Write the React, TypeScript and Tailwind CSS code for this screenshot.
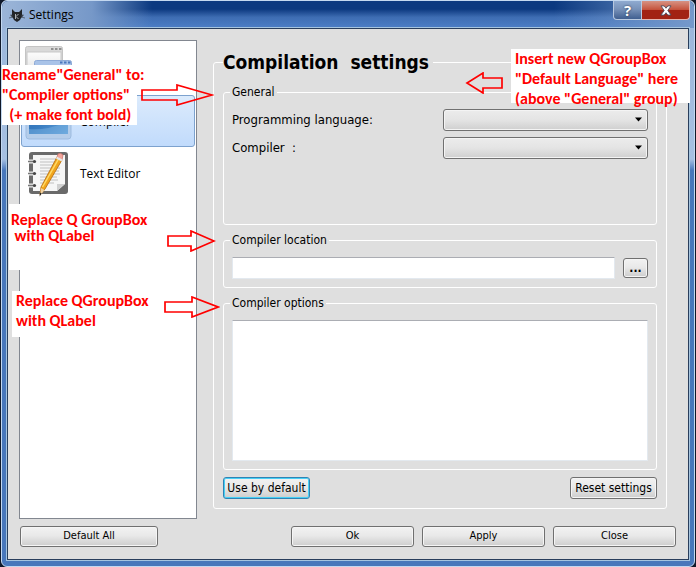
import type { ButtonHTMLAttributes, ReactNode } from 'react';
import { useState } from 'react';

const tahoma = "font-['DejaVu_Sans_Condensed','DejaVu_Sans',sans-serif]";

type PushButtonProps = ButtonHTMLAttributes<HTMLButtonElement> & { highlighted?: boolean };

function PushButton({ className = '', highlighted = false, children, ...rest }: PushButtonProps) {
  const edge = highlighted
    ? 'border-[#2f83b5] shadow-[inset_0_0_0_1px_#48d0f5]'
    : 'border-[#707070] shadow-[inset_0_0_0_1px_#f5f5f5]';
  return (
    <button
      type="button"
      className={`shrink-0 whitespace-nowrap rounded-[3px] border bg-linear-to-b from-[#f2f2f2] from-0% via-[#e9e9e9] via-45% to-[#cdcdcd] text-center text-black ${edge} ${className}`}
      {...rest}
    >
      {children}
    </button>
  );
}

function Group({ title, className = '', children }: { title: string; className?: string; children: ReactNode }) {
  return (
    <fieldset className={`min-w-0 rounded-[3px] border border-white px-2 pb-2 ${className}`}>
      <legend className="-ml-0.5 px-0.5 text-[12px] leading-4">{title}</legend>
      {children}
    </fieldset>
  );
}

function Combo({ id, label }: { id: string; label: string }) {
  return (
    <div className="flex h-[22px] items-center">
      <label htmlFor={id} className="w-[211px] shrink-0 whitespace-pre text-[13px]">{label}</label>
      <div className="relative h-full flex-1">
        <select
          id={id}
          className="block h-full w-full appearance-none rounded-[3px] border border-[#707070] bg-linear-to-b from-[#ececec] via-[#e4e4e4] via-50% to-[#cfcfcf] shadow-[inset_0_0_0_1px_#f4f4f4]"
        >
          <option value=""></option>
        </select>
        <svg className="pointer-events-none absolute right-1.5 top-2" width="7" height="5" viewBox="0 0 7 5">
          <path d="M0 0.5h7L3.5 4.5z" fill="#000" />
        </svg>
      </div>
    </div>
  );
}

function WindowsIcon() {
  return (
    <svg width="48" height="48" viewBox="0 0 48 48" className="shrink-0">
      <defs>
        <linearGradient id="pane" x1="0" y1="0" x2="0" y2="1">
          <stop offset="0" stopColor="#fcfcfc" />
          <stop offset="1" stopColor="#d9d9d9" />
        </linearGradient>
      </defs>
      <rect x="1.5" y="1.5" width="37" height="36" rx="2" fill="#d9d9d9" stroke="#c4c4c4" />
      <rect x="3" y="7" width="34" height="30" fill="url(#pane)" stroke="#c8c8c8" />
      <path d="M27 4h2.500m1.500 0h2.500m1.500 0h2.500" stroke="#8f8f8f" strokeWidth="2" />
      <rect x="10.500" y="15.500" width="37" height="31" rx="2" fill="#a9c3e8" stroke="#8fabd6" />
      <rect x="12" y="20" width="34" height="26" fill="#edf4fd" />
      <path d="M36 17.500h2.500m1.500 0h2.500m1.500 0h2.500" stroke="#4c78bd" strokeWidth="2" />
    </svg>
  );
}

function CompilerIcon() {
  return (
    <svg width="48" height="48" viewBox="0 0 48 48" className="shrink-0">
      <defs>
        <linearGradient id="screen" x1="0" y1="0" x2="1" y2="1">
          <stop offset="0" stopColor="#2b6cb4" />
          <stop offset="0.500" stopColor="#397cc0" />
          <stop offset="1" stopColor="#65a4dc" />
        </linearGradient>
      </defs>
      <rect x="2" y="2" width="45" height="40" rx="3" fill="#b4cdea" stroke="#9dbbe0" />
      <rect x="5" y="7" width="39" height="30" fill="url(#screen)" />
      <path d="M5 37V32Q20 34 44 25V37z" fill="#7cb4e3" opacity="0.45" />
    </svg>
  );
}

function EditorIcon() {
  return (
    <svg width="48" height="48" viewBox="0 0 48 48" className="shrink-0">
      <rect x="5" y="3" width="39" height="42" rx="3" fill="#6a6a6a" />
      <path d="M9 6h32v29l-8 7H9z" fill="#f6f6f6" />
      <path d="M33 42v-7h8z" fill="#d0d0d0" />
      <path d="M16 10h20M16 13h20M16 16h19M16 19h20M16 22h19M16 25h20M16 28h17M16 31h18M16 34h14" stroke="#d2d2d2" strokeWidth="1.500" />
      <path d="M5 12.500h6M5 24.500h6M5 36.500h6" stroke="#eee" strokeWidth="4" />
      <path d="M4 12.500h6M4 24.500h6M4 36.500h6" stroke="#777" strokeWidth="1.500" />
      <circle cx="10.500" cy="12.500" r="1.600" fill="#444" />
      <circle cx="10.500" cy="24.500" r="1.600" fill="#444" />
      <circle cx="10.500" cy="36.500" r="1.600" fill="#444" />
      <path d="M33 8l5 3-17 29-5 6 1-8z" fill="#f1a51d" stroke="#b4690c" strokeWidth="0.800" />
      <path d="M34.500 10L18.500 38" stroke="#ffdb68" strokeWidth="1.500" />
      <path d="M17 39l3.500 2-4.500 6z" fill="#efd2a4" />
      <path d="M16.200 43.500l1.500 1-2.200 3z" fill="#222" />
      <path d="M33 8l1-3q2.500-2 5 1l-1 5z" fill="#f3a49a" stroke="#c37069" strokeWidth="0.700" />
      <path d="M32.500 8.500l5.500 3" stroke="#e8e8e8" strokeWidth="2" />
    </svg>
  );
}

function CatIcon() {
  return (
    <svg width="16" height="16" viewBox="0 0 16 16">
      <path d="M3 2l3 3h4l3-3v5l1 2-2 2-1 2-3 2-3-2-1-2-2-2 1-2z" fill="#222529" />
      <path d="M1 8l3 1M0 11l4-1M15 8l-3 1M16 11l-4-1" stroke="#3f4650" strokeWidth="0.700" />
      <path d="M6.500 7v5M9.500 7L7 9.500 9.500 12" stroke="#aeb3b8" strokeWidth="1" fill="none" />
    </svg>
  );
}

function Arrow({ place, left = false, shaft, head }: { place: string; left?: boolean; shaft: number; head: number }) {
  const w = shaft + head + 2;
  const neck = left ? head : shaft;
  const pts = left
    ? `${w - 1},6 ${neck},6 ${neck},1 2,11 ${neck},21 ${neck},16 ${w - 1},16`
    : `1,6 ${neck},6 ${neck},1 ${w - 2},11 ${neck},21 ${neck},16 1,16`;
  return (
    <svg className={`pointer-events-none absolute ${place}`} width={w} height="22" viewBox={`0 0 ${w} 22`}>
      <polygon points={pts} fill="none" stroke="#ff0000" strokeWidth="1.700" />
    </svg>
  );
}

function Note({ place, children }: { place: string; children: ReactNode }) {
  return (
    <p className={`absolute whitespace-pre bg-white font-['Carlito','Lato',sans-serif] text-[16px] font-bold text-[#ff0000] ${place}`}>
      {children}
    </p>
  );
}

export default function App() {
  const [page, setPage] = useState('Compiler');
  const pages = [
    { name: 'General', icon: <WindowsIcon />, iconOnly: true },
    { name: 'Compiler', icon: <CompilerIcon />, iconOnly: false },
    { name: 'Text Editor', icon: <EditorIcon />, iconOnly: false },
  ];

  return (
    <div className={`flex min-h-screen bg-[#10192a] px-px text-black ${tahoma}`}>
      <div className="relative flex flex-1 flex-col rounded-md border border-[#c3d8f0] bg-linear-to-b from-[#9ab5da] from-0% via-[#a7c0e2] via-28% to-[#4877bb] to-30% px-[5px] pb-[6px]">
        <header className="-mx-[5px] flex h-[27px] items-center rounded-t-md bg-linear-to-b from-[#0b3980] from-30% via-[#3e6db3] via-60% to-[#4c7ec6]">
          <div className="flex h-full w-[150px] items-center gap-1 rounded-tl-md bg-linear-to-r from-[#9bb5d8] via-[#7698c8] via-60% to-transparent pl-[7px]">
            <CatIcon />
            <h1 className="font-['Open_Sans',sans-serif] text-[12px] leading-4">Settings</h1>
          </div>
          <div className="ml-auto flex h-full w-[140px] items-start justify-end rounded-tr-md bg-linear-to-r from-transparent to-[#7599cb] pr-1">
            <button type="button" aria-label="Help" className="flex h-[19px] w-[29px] items-center justify-center rounded-bl-[4px] border border-t-0 border-[#b9c9df] bg-linear-to-b from-[#8faad0] via-[#7892b9] via-45% to-[#405f90] font-['Open_Sans',sans-serif] text-[15px] font-bold leading-none text-white [text-shadow:0_0_2px_#17243c]">
              ?
            </button>
            <button type="button" aria-label="Close window" className="flex h-[19px] w-[48px] items-center justify-center rounded-br-[4px] border border-l-0 border-t-0 border-[#e2b7b2] bg-linear-to-b from-[#d69283] from-0% via-[#c5523c] via-48% to-[#a22313] to-52%">
              <svg width="12" height="11" viewBox="0 0 13 12">
                <path d="M1 1h3.500l2 2.500L8.500 1H12L8.500 6l3.500 5H8.500l-2-2.500L4.500 11H1l3.500-5z" fill="#fff" stroke="#4b4f60" strokeWidth="1" />
              </svg>
            </button>
          </div>
        </header>

        <main className="flex flex-1 flex-col border border-[#293e5c] bg-[#dfdfdf] outline outline-[#a5c4df]">
          <div className="flex flex-1 gap-4 pl-[11px] pr-[21px] pt-[11px]">
            <nav className="w-[178px] shrink-0 border border-[#828790] bg-white p-px pt-0.5" aria-label="Settings pages">
              {pages.map((item) => (
                <button
                  key={item.name}
                  type="button"
                  aria-label={item.name}
                  onClick={() => setPage(item.name)}
                  className={`flex h-[52px] w-full items-center gap-2 rounded-[3px] border pl-0.5 text-left font-['Open_Sans',sans-serif] text-[12px] ${
                    page === item.name
                      ? 'border-[#7da2ce] bg-linear-to-b from-[#dcebfc] to-[#c1dbfc]'
                      : 'border-transparent'
                  }`}
                >
                  {item.icon}
                  {!item.iconOnly && <span className="pt-0.5">{item.name}</span>}
                </button>
              ))}
            </nav>

            <fieldset className="my-[10px] flex min-w-0 flex-1 flex-col rounded-[3px] border border-white px-[9px] pb-[9px] text-[12px]">
              <legend className="whitespace-pre pr-1 text-[19px] font-bold leading-6">Compilation  settings</legend>
              <div className="flex flex-1 flex-col gap-[7px] pt-2.5">
                <Group title="General" className="h-[141px]">
                  <div className="flex flex-col gap-1.5 pt-[9px]">
                    <Combo id="language" label="Programming language:" />
                    <Combo id="compiler" label="Compiler  :" />
                  </div>
                </Group>
                <Group title="Compiler location">
                  <div className="flex items-center gap-2 pt-[9px]">
                    <input
                      aria-label="Compiler location"
                      className="h-[22px] min-w-0 flex-1 border border-[#e3e9ef] border-t-[#abadb3] bg-white px-1"
                    />
                    <PushButton aria-label="Browse" className="h-5 w-[25px] font-bold leading-4">...</PushButton>
                  </div>
                </Group>
                <Group title="Compiler options" className="flex flex-1 flex-col">
                  <textarea
                    aria-label="Compiler options"
                    className="mt-[9px] block min-h-[136px] w-full flex-1 resize-none border border-[#e3e9ef] border-t-[#abadb3] bg-white p-1"
                  />
                </Group>
                <div className="flex justify-between">
                  <PushButton highlighted className="h-[22px] w-[87px]">Use by default</PushButton>
                  <PushButton className="h-[22px] w-[87px]">Reset settings</PushButton>
                </div>
              </div>
            </fieldset>
          </div>

          <footer className="flex gap-2 px-3 pb-3 pt-[7px] text-[11px]">
            <PushButton className="mr-auto h-[21px] w-[138px]">Default All</PushButton>
            <PushButton className="h-[21px] w-[123px]">Ok</PushButton>
            <PushButton className="h-[21px] w-[123px]">Apply</PushButton>
            <PushButton className="h-[21px] w-[123px]">Close</PushButton>
          </footer>
        </main>

        <Note place="left-0 top-16 w-[135px] leading-5">{'Rename"General" to:\n"Compiler options"\n  (+ make font bold)'}</Note>
        <Note place="left-[7px] top-[203px] h-[66px] w-[150px] pl-0.5 pt-2 leading-4">{'Replace Q GroupBox\n with QLabel'}</Note>
        <Note place="left-[10px] top-[290px] h-[46px] w-[150px] pl-1 leading-5">{'Replace QGroupBox\nwith QLabel'}</Note>
        <Note place="right-1 top-12 h-[54px] w-[179px] pl-1 leading-5">{'Insert new QGroupBox\n"Default Language" here\n(above "General" group)'}</Note>
        <Arrow place="left-[139px] top-[83px]" shaft={36} head={35} />
        <Arrow place="left-[165px] top-[229px]" shaft={24} head={23} />
        <Arrow place="left-[162px] top-[295px]" shaft={28} head={26} />
        <Arrow place="right-[191px] top-[71px]" shaft={18} head={18} left />
      </div>
    </div>
  );
}
